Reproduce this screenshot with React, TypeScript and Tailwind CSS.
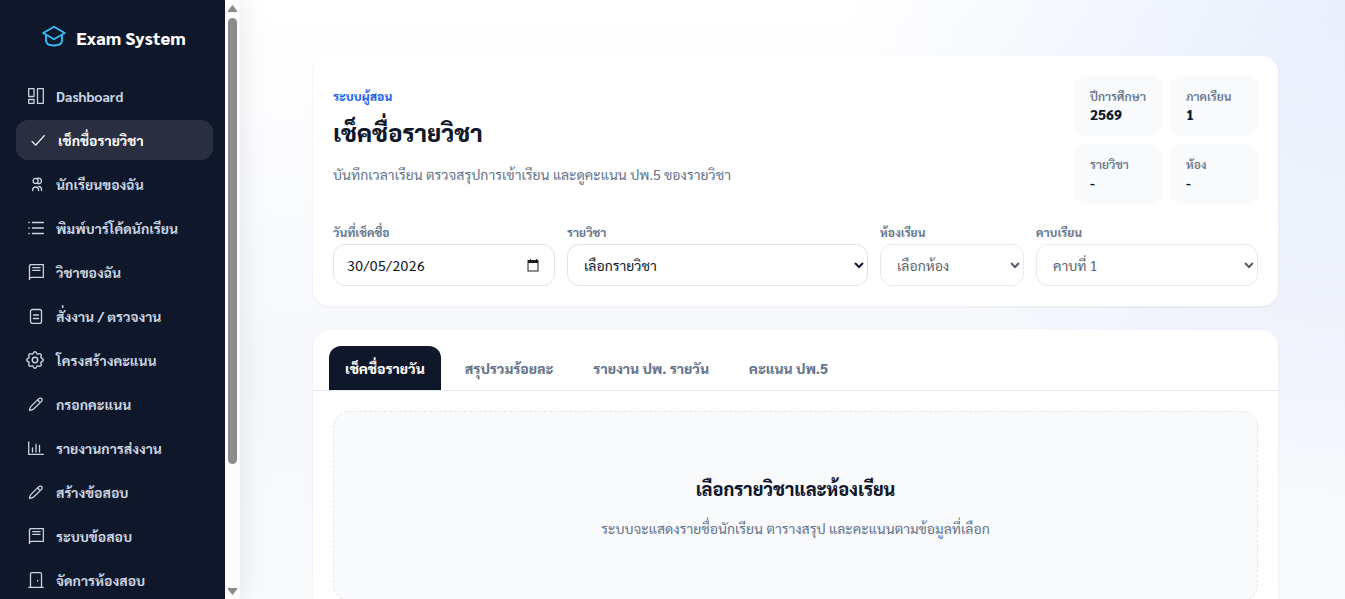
import { useState, type ReactNode } from 'react'
import { TbSettings } from 'react-icons/tb'

interface NavItem {
  label: string
  icon: ReactNode
}

function Icon({ children }: { children: ReactNode }) {
  return (
    <svg
      viewBox="0 0 16 16"
      className="h-4 w-4 shrink-0"
      fill="none"
      stroke="currentColor"
      strokeWidth="1.3"
      strokeLinecap="round"
      strokeLinejoin="round"
    >
      {children}
    </svg>
  )
}

const penIcon = (
  <Icon>
    <path d="M1.600 14.400c.1-2 .5-3 1.400-4l7.600-7.500c1.100-1.100 2.300-1.100 3-.3.8.7.8 1.900-.3 3L5.600 13c-1 .9-2 1.300-4 1.400Z" />
    <path d="m10 4.300 1.700 1.700" />
  </Icon>
)

const bookIcon = (
  <Icon>
    <path d="M1.500 15.600V2.200C1.500 1.200 2 .6 3 .6h12.400v12.800H3.200c-.9 0-1.700.9-1.700 2.200" />
    <path d="M4.700 3.600h7.400M4.700 6.300h7.400" />
  </Icon>
)

const navItems: NavItem[] = [
  {
    label: 'Dashboard',
    icon: (
      <Icon>
        <path d="M.7.700h5.300v7.800H.7zM.7 11.500h5.300v3.800H.7zM9.500.700h5.800v14.600H9.500z" />
      </Icon>
    ),
  },
  {
    label: 'เช็กชื่อรายวิชา',
    icon: (
      <Icon>
        <path d="m2 9.400 3.700 3.700L14.300 3.600" />
      </Icon>
    ),
  },
  {
    label: 'นักเรียนของฉัน',
    icon: (
      <Icon>
        <circle cx="7.600" cy="4.900" r="2.500" />
        <path d="M8.800 2.500c3.200-.9 4.700.5 4.700 2.400s-1.500 3.200-4 2.500M4.600 14.500c.2-4.700 5.900-4.700 6 0M10.800 10.500c1.800.1 2.800 1.500 2.800 4" />
      </Icon>
    ),
  },
  {
    label: 'พิมพ์บาร์โค้ดนักเรียน',
    icon: (
      <Icon>
        <path d="M4.400 2.500h11M4.400 8h11M4.400 13.500h11M.8 2.500h.4M.8 8h.4M.8 13.500h.4" />
      </Icon>
    ),
  },
  { label: 'วิชาของฉัน', icon: bookIcon },
  {
    label: 'สั่งงาน / ตรวจงาน',
    icon: (
      <Icon>
        <rect x="2.500" y="1.500" width="11" height="14" rx="2" />
        <path d="M5.500 7h5M5.500 10.500h5" />
      </Icon>
    ),
  },
  {
    label: 'โครงสร้างคะแนน',
    icon: <TbSettings className="-ml-1 -mr-0.5 h-[22px] w-[22px] shrink-0 [stroke-width:1.500]" />,
  },
  { label: 'กรอกคะแนน', icon: penIcon },
  {
    label: 'รายงานการส่งงาน',
    icon: (
      <Icon>
        <path d="M.7 1.800v12.600h14.600M4.500 8v4M8 4.500v7.500M11.500 5.500v6.500" />
      </Icon>
    ),
  },
  { label: 'สร้างข้อสอบ', icon: penIcon },
  { label: 'ระบบข้อสอบ', icon: bookIcon },
  {
    label: 'จัดการห้องสอบ',
    icon: (
      <Icon>
        <path d="M.7 15.300h14.600M2.500 15.300V2.200c0-1 .5-1.500 1.500-1.500h8c1 0 1.500.5 1.500 1.500v13.100M9.700 8.500v.6" />
      </Icon>
    ),
  },
]

const stats = [
  { label: 'ปีการศึกษา', value: '2569' },
  { label: 'ภาคเรียน', value: '1' },
  { label: 'รายวิชา', value: '-' },
  { label: 'ห้อง', value: '-' },
]

const tabs = ['เช็คชื่อรายวัน', 'สรุปรวมร้อยละ', 'รายงาน ปพ. รายวัน', 'คะแนน ปพ.5']

function Sidebar() {
  return (
    <aside className="flex h-full w-60 shrink-0 bg-[#0f172a] shadow-[4px_0_24px_rgba(15,23,42,0.08)]">
      <div className="flex-1 overflow-hidden pl-4 pr-3">
        <div className="flex h-[76px] items-center justify-center gap-2.5 pr-px">
          <svg
            viewBox="0 0 24 24"
            className="-mt-1 h-6 w-6 text-[#38bdf8]"
            fill="none"
            stroke="currentColor"
            strokeWidth="1.900"
            strokeLinejoin="round"
          >
            <path d="M12 2.800 1.200 9 12 15.200 22.800 9 12 2.800Z" />
            <path d="M4 11v5.500c0 3.500 3.500 5 8 5s8-1.500 8-5V11" />
          </svg>
          <span className="text-lg font-extrabold text-white">Exam System</span>
        </div>
        <nav className="flex flex-col gap-1 text-sm font-bold text-slate-300">
          {navItems.map((item, i) => (
            <a
              key={item.label}
              className={
                i === 1
                  ? 'flex h-10 items-center gap-3 rounded-xl bg-[#292f40] pl-3.5 text-white'
                  : 'flex h-10 items-center gap-3 rounded-xl pl-3'
              }
            >
              {item.icon}
              <span className="whitespace-nowrap">{item.label}</span>
            </a>
          ))}
        </nav>
      </div>
      {/* scrollbar track */}
      <div className="flex w-[15px] flex-col items-center bg-[#fcfcfc] text-[#8b8b8b]">
        <svg viewBox="0 0 9 7" className="mt-[5px] h-[7px] w-[9px]" fill="currentColor">
          <path d="M4.500 0 9 5.500V7H0V5.500z" />
        </svg>
        <div className="mt-1.5 h-[446px] w-[9px] rounded-full bg-[#8b8b8b]" />
        <svg viewBox="0 0 9 7" className="mb-1 mt-auto h-[7px] w-[9px]" fill="currentColor">
          <path d="M0 0h9v1.500L4.500 7 0 1.500z" />
        </svg>
      </div>
    </aside>
  )
}

function Field({ label, children }: { label: string; children: ReactNode }) {
  return (
    <label className="block">
      <span className="block text-xs font-bold text-[#64748b]">{label}</span>
      <div className="mt-1">{children}</div>
    </label>
  )
}

function Filters() {
  return (
    <div className="mt-5 grid grid-cols-[222px_301px_144px_222px] gap-3">
      <Field label="วันที่เช็คชื่อ">
        <div className="flex h-[42px] items-center justify-between rounded-xl border border-[#dbe3ef] bg-white pl-[13px] pr-3.5 text-sm text-slate-900">
          <span className="tracking-[0.5px]">30/05/2026</span>
          <svg viewBox="0 0 13 13" className="h-[13px] w-[13px]" fill="#1f1f1f">
            <path d="M3 0h1v1h5V0h1v1h1.500v11.500h-11V1H3zM1.500 4v7.500h9V4z" />
          </svg>
        </div>
      </Field>
      <Field label="รายวิชา">
        <select className="block h-[42px] w-full rounded-xl border border-[#dbe3ef] bg-white px-3 text-sm text-slate-900">
          <option>เลือกรายวิชา</option>
        </select>
      </Field>
      <Field label="ห้องเรียน">
        <select
          disabled
          className="block h-[42px] w-full rounded-xl border border-[#dbe3ef] bg-white px-3 text-sm text-slate-900 opacity-70"
        >
          <option>เลือกห้อง</option>
        </select>
      </Field>
      <Field label="คาบเรียน">
        <select
          disabled
          className="block h-[42px] w-full rounded-xl border border-[#dbe3ef] bg-white px-3 text-sm text-slate-900 opacity-70"
        >
          <option>คาบที่ 1</option>
        </select>
      </Field>
    </div>
  )
}

export default function App() {
  const [activeTab, setActiveTab] = useState(tabs[0])

  return (
    <div className="flex h-screen overflow-hidden bg-[radial-gradient(circle_at_top_right,rgba(37,99,235,0.1),transparent_34%),linear-gradient(180deg,#ffffff_0%,#f6f8fc_60%,#f8fafc_100%)] font-['Sarabun','Noto_Sans_Thai_Looped','Noto_Sans',sans-serif] text-[#0f172a]">
      <Sidebar />
      <main className="flex flex-1 flex-col gap-6 pl-[73px] pr-[67px] pt-14">
        <section className="h-[250px] shrink-0 rounded-2xl bg-white p-5 shadow-[0_1px_3px_rgba(15,23,42,0.07)]">
          <div className="flex items-start justify-between">
            <div className="pt-3">
              <p className="text-xs font-extrabold tracking-[0.1px] text-[#2563eb]">ระบบผู้สอน</p>
              <h1 className="mt-3 text-2xl font-extrabold">เช็คชื่อรายวิชา</h1>
              <p className="mt-4 text-sm text-[#64748b]">
                บันทึกเวลาเรียน ตรวจสรุปการเข้าเรียน และดูคะแนน ปพ.5 ของรายวิชา
              </p>
            </div>
            <div className="grid grid-cols-[88px_88px] gap-2">
              {stats.map((stat) => (
                <div key={stat.label} className="h-[60px] rounded-xl bg-slate-50 px-4 py-3">
                  <p className="whitespace-nowrap text-xs font-semibold text-[#64748b]">{stat.label}</p>
                  <p className="text-sm font-extrabold">{stat.value}</p>
                </div>
              ))}
            </div>
          </div>
          <Filters />
        </section>

        <section className="flex-1 rounded-t-2xl bg-white shadow-[0_1px_3px_rgba(15,23,42,0.07)]">
          <div className="flex gap-2 border-b border-slate-200 px-4 pt-4">
            {tabs.map((tab) => (
              <button
                key={tab}
                onClick={() => setActiveTab(tab)}
                className={
                  tab === activeTab
                    ? 'h-11 rounded-t-xl bg-[#0f172a] px-4 text-sm font-extrabold text-white'
                    : 'h-11 rounded-t-xl px-4 text-sm font-extrabold text-[#64748b]'
                }
              >
                {tab}
              </button>
            ))}
          </div>
          <div className="p-5">
            <div className="h-[190px] rounded-2xl border border-dashed border-slate-200 bg-slate-50 pt-[63px] text-center">
              <h2 className="text-lg font-extrabold">เลือกรายวิชาและห้องเรียน</h2>
              <p className="mt-[15px] text-sm text-[#64748b]">
                ระบบจะแสดงรายชื่อนักเรียน ตารางสรุป และคะแนนตามข้อมูลที่เลือก
              </p>
            </div>
          </div>
        </section>
      </main>
    </div>
  )
}
